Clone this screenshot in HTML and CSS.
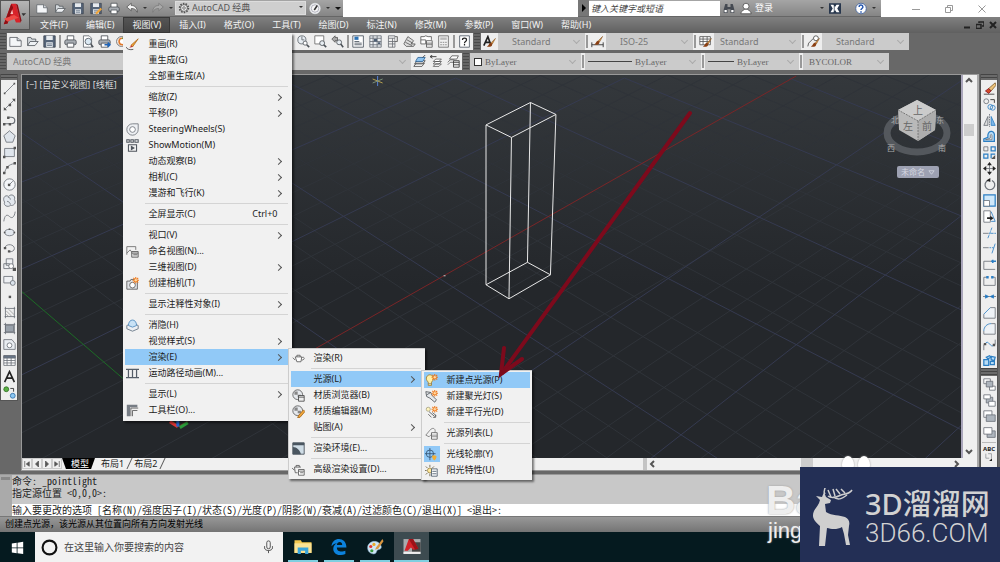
FILE: index.html
```html
<!DOCTYPE html>
<html lang="zh-CN">
<head>
  <meta charset="UTF-8">
  <meta name="viewport" content="width=device-width, initial-scale=1.0">
  <title>AutoCAD 经典</title>
  <link rel="stylesheet" href="styles.css">
</head>
<body>
  <!-- shared icons -->
  <svg class="sprite" aria-hidden="true">
    <symbol id="i-new" viewBox="0 0 16 16"><path d="M1 3h9l5 4v7H1z" fill="#f4f6f8" stroke="#5c6066"/><path d="M10 3v4h5" fill="#cfd4da" stroke="#5c6066"/></symbol>
    <symbol id="i-open" viewBox="0 0 16 16"><path d="M2 13V3h4l1 2h5v3" fill="#d5dade" stroke="#50555b"/><path d="M2 13l3-5h10l-4 5z" fill="#eef1f4" stroke="#50555b"/></symbol>
    <symbol id="i-save" viewBox="0 0 16 16"><path d="M1 1h14v14H1z" fill="#566579" stroke="#3c4450"/><path d="M4 1h8v5H4zM4 9h8v6H4z" fill="#e6eaee"/><path d="M5 11h6M5 13h6" stroke="#566579"/></symbol>
    <symbol id="i-print" viewBox="0 0 16 16"><path d="M4 6V1h8v5" fill="#fff" stroke="#474c52"/><rect x="1" y="6" width="14" height="6" rx="2" fill="#a8adb3" stroke="#474c52"/><path d="M4 10h8v5H4z" fill="#fff" stroke="#474c52"/></symbol>
    <symbol id="i-doc" viewBox="0 0 16 16"><path d="M3 1h7l3 3v11H3z" fill="#fff" stroke="#60656b"/></symbol>
    <symbol id="i-brush" viewBox="0 0 16 16"><path d="M15 1L8 8l2 2z" fill="#d99a4e" stroke="#8d5a26"/><path d="M8 8c-4 0-3 5-7 6 4 2 9 0 9-4z" fill="#8a3f12"/></symbol>
    <symbol id="i-star" viewBox="0 0 16 16"><path d="M12 0v8M8 4h8M9 1l6 6M15 1L9 7" stroke="#f07818" stroke-width="1.3"/><circle cx="12" cy="4" r="1.5" fill="#ffd9a0"/></symbol>
  </svg>

  <div class="desktop">
    <header class="app-head">
      <button class="app-logo" aria-label="应用程序菜单">
        <svg viewBox="0 0 30 30"><path d="M3 25L11 3h5l5 20h-5l-2-5H9l-2 6z" fill="#d8232a"/><path d="M11 3l-8 22 4-1 6-17zM16 3l5 20 1-2-4-17z" fill="#8d0f14"/><path d="M10 14h3l-1-5z" fill="#f6c3c0"/><path d="M3 19l11-4 5 3-12 4z" fill="#ee4b46"/><path d="M22 13h5l-3 3z" fill="#333"/></svg>
      </button>
      <div class="title-bar">
        <div class="quick">
          <button class="qbtn" aria-label="新建"><svg><use href="#i-new"/></svg></button>
          <button class="qbtn" aria-label="打开"><svg><use href="#i-open"/></svg></button>
          <button class="qbtn" aria-label="保存"><svg><use href="#i-save"/></svg></button>
          <button class="qbtn" aria-label="另存为"><svg viewBox="0 0 16 16"><use href="#i-save"/><path d="M7 14l7-7 2 2-7 7z" fill="#f1a63a"/></svg></button>
          <button class="qbtn" aria-label="打印"><svg><use href="#i-print"/></svg></button>
          <button class="qbtn" aria-label="放弃"><svg viewBox="0 0 16 16"><path d="M1 6l6-5v3c5 0 8 3 8 9-2-4-4-5-8-5v3z" fill="#f3f3f3" stroke="#4e4e4e"/></svg></button>
          <span class="caret"></span>
          <button class="qbtn" aria-label="重做"><svg viewBox="0 0 16 16"><path d="M15 6L9 1v3C4 4 1 7 1 13c2-4 4-5 8-5v3z" fill="#aaa" stroke="#787878"/></svg></button>
          <span class="caret"></span>
          <label class="space-pick">
            <svg viewBox="0 0 16 16"><circle cx="8" cy="8" r="5.5" fill="none" stroke="#555" stroke-width="3" stroke-dasharray="2 1.4"/><circle cx="8" cy="8" r="4.5" fill="#eee" stroke="#555"/><circle cx="8" cy="8" r="1.7" fill="none" stroke="#555"/></svg>
            <select aria-label="工作空间"><option>AutoCAD 经典</option></select>
          </label>
          <button class="qbtn compass" aria-label="工作空间设置"><svg viewBox="0 0 16 16"><circle cx="8" cy="8" r="7" fill="#f6f6f6" stroke="#dfe3e6"/><circle cx="8" cy="8" r="5" fill="none" stroke="#99a"/><path d="M11 4L7 10" stroke="#333" stroke-width="2"/></svg></button>
          <span class="caret"></span>
          <span class="caret wide"></span>
        </div>
        <div class="info-center">
          <span class="play"></span>
          <input class="keyword" type="text" placeholder="键入关键字或短语" aria-label="键入关键字或短语">
          <button class="qbtn" aria-label="搜索"><svg viewBox="0 0 16 16"><path d="M3 2h3v4h4V2h3l2 7v5h-5V9H6v5H1V9z" fill="#454a52"/><path d="M2 10h3v3H2zM11 10h3v3h-3z" fill="#fff"/></svg></button>
          <button class="sign-in"><svg viewBox="0 0 16 16"><circle cx="8" cy="5" r="4" fill="#fff" stroke="#444"/><path d="M1 15c0-4 4-4 5-6h4c1 2 5 2 5 6z" fill="#fff" stroke="#444"/></svg>登录</button>
          <span class="caret"></span>
          <button class="qbtn" aria-label="Exchange"><svg viewBox="0 0 16 16"><path d="M0 1h16v14H0z" fill="#27364c"/><path d="M2 3h4l2 3 2-3h4l-3 5 3 5h-4l-2-3-2 3H2l3-5z" fill="#fff"/><path d="M7 2v12" stroke="#27364c"/></svg></button>
          <button class="qbtn help" aria-label="帮助"><svg viewBox="0 0 16 16"><circle cx="8" cy="8" r="7" fill="#fff" stroke="#33589a"/><path d="M5.500 6c0-4 5-3 5 0 0 2-2.500 2-2.500 4M8 11.500v2" fill="none" stroke="#2456b0" stroke-width="2"/></svg></button>
          <span class="caret"></span>
        </div>
        <div class="win-btns">
          <button aria-label="最小化"><svg viewBox="0 0 8 8"><path d="M0 4.500h8"/></svg></button>
          <button aria-label="还原"><svg viewBox="0 0 8 8"><path d="M.5 2.500h5v5h-5zM2.500 2V.5h5v5H6"/></svg></button>
          <button aria-label="关闭"><svg viewBox="0 0 8 8"><path d="M.5.5l7 7M7.500.5l-7 7"/></svg></button>
        </div>
      </div>
      <nav class="menu-bar">
        <button>文件(F)</button>
        <button>编辑(E)</button>
        <div class="menu-open">
          <button class="current">视图(V)</button>
          <ul class="menu view-menu">
            <li><button><svg viewBox="0 0 16 16"><path d="M15 1L6 9l2 2z" fill="#f1a63a" stroke="#b06a1c"/><path d="M7 9l-3 3 4-1z" fill="#b33"/><path d="M0 11c1 3 5 4 9 3" fill="none" stroke="#444"/></svg><span>重画(R)</span></button></li>
            <li><button><span>重生成(G)</span></button></li>
            <li><button><span>全部重生成(A)</span></button></li>
            <li class="rule"></li>
            <li><button class="more"><span>缩放(Z)</span></button></li>
            <li><button class="more"><span>平移(P)</span></button></li>
            <li><button><svg viewBox="0 0 16 16"><path d="M8 1h7v7a7 7 0 1 1-7-7z" fill="#eef0f3" stroke="#6b7078"/><circle cx="8" cy="8" r="3.500" fill="#fff" stroke="#6b7078"/></svg><span>SteeringWheels(S)</span></button></li>
            <li><button><svg viewBox="0 0 16 16"><path d="M1 1h3v3H1zM6 1h3v3H6zM11 1h4v3h-4zM3 7h10v8H3z" fill="none" stroke="#50565e" stroke-width="1.300"/><path d="M6 8l5 3-5 3z" fill="#50565e"/></svg><span>ShowMotion(M)</span></button></li>
            <li><button class="more"><span>动态观察(B)</span></button></li>
            <li><button class="more"><span>相机(C)</span></button></li>
            <li><button class="more"><span>漫游和飞行(K)</span></button></li>
            <li class="rule"></li>
            <li><button><span>全屏显示(C)</span><kbd>Ctrl+0</kbd></button></li>
            <li class="rule"></li>
            <li><button class="more"><span>视口(V)</span></button></li>
            <li><button><svg viewBox="0 0 16 16"><path d="M1 12V2h11v4M1 10l4-4 4 5" fill="none" stroke="#666"/><path d="M7 8h8v7H7z" fill="#ddd" stroke="#555"/><path d="M7 10h8M9 12h5" stroke="#555"/></svg><span>命名视图(N)...</span></button></li>
            <li><button class="more"><span>三维视图(D)</span></button></li>
            <li><button><svg viewBox="0 0 16 16"><path d="M1 5h4l1-2h5v2h3v10H1z" fill="#dfe2e6" stroke="#555"/><circle cx="8" cy="10" r="3.500" fill="#fff" stroke="#555"/><use href="#i-star"/></svg><span>创建相机(T)</span></button></li>
            <li class="rule"></li>
            <li><button class="more"><span>显示注释性对象(I)</span></button></li>
            <li class="rule"></li>
            <li><button><svg viewBox="0 0 16 16"><path d="M1 8l7-3 7 3v4l-7 3-7-3z" fill="#eceff3" stroke="#5d6d7e"/><path d="M3 8c0-9 10-9 10 0l-5 2z" fill="#c8e2f6" stroke="#4a86bb"/></svg><span>消隐(H)</span></button></li>
            <li><button class="more"><span>视觉样式(S)</span></button></li>
            <li class="sub">
              <button class="more active"><span>渲染(E)</span></button>
              <ul class="menu render-menu">
                <li><button><svg viewBox="0 0 16 16"><path d="M4 6h8l-1 6H6zM4 10L1 7M12 7c4-2 4 3 0 3M6 6V4h4v2" fill="#fff" stroke="#555"/></svg><span>渲染(R)</span></button></li>
                <li class="rule"></li>
                <li class="sub">
                  <button class="more active"><span>光源(L)</span></button>
                  <ul class="menu light-menu">
                    <li><button class="active"><svg viewBox="0 0 16 16"><path d="M4 10C-1 5 3 1 6 1s7 4 2 9v4H4z" fill="#fff0a8" stroke="#a07a28"/><path d="M4 12h4" stroke="#777"/><use href="#i-star"/></svg><span>新建点光源(P)</span></button></li>
                    <li><button><svg viewBox="0 0 16 16"><path d="M1 2l6 1 2 4 5 5-2 3-6-5-4-2z" fill="#e5e8eb" stroke="#4d5258"/><path d="M2 6l5-3" stroke="#4d5258"/><use href="#i-star"/></svg><span>新建聚光灯(S)</span></button></li>
                    <li><button><svg viewBox="0 0 16 16"><circle cx="4" cy="4" r="2.500" fill="#fff4bc" stroke="#a5a184"/><path d="M5 7l7 6M9 8l5 4M4 10l4 4M10 14h3v-3" fill="none" stroke="#555"/><use href="#i-star"/></svg><span>新建平行光(D)</span></button></li>
                    <li class="rule"></li>
                    <li><button><svg viewBox="0 0 16 16"><path d="M1 10l5-6c4-5 8-1 6 3M1 10l4 2 3-3" fill="none" stroke="#777"/><path d="M8 7h7v8H8z" fill="#fff" stroke="#555"/><path d="M8 10h7M8 12h7" stroke="#777"/></svg><span>光源列表(L)</span></button></li>
                    <li class="rule"></li>
                    <li><button class="checked"><svg viewBox="0 0 16 16"><circle cx="6" cy="7" r="4.500" fill="none" stroke="#31506e"/><path d="M6 0v15M0 7h13" stroke="#31506e"/><path d="M11 9c5 0 3 4 1 6h-1c-2-2-4-6 0-6z" fill="#f3ae35"/></svg><span>光线轮廓(Y)</span></button></li>
                    <li><button><svg viewBox="0 0 16 16"><circle cx="6" cy="8" r="3" fill="#ffe99a" stroke="#9a8142"/><path d="M6 1v3M1 3l2 2M0 8h2M1 13l2-2M11 3L9 5M6 12v3" stroke="#665c3f"/><path d="M8 6h7v9H8z" fill="#fff" stroke="#456"/><path d="M9 9h5M9 12h5" stroke="#456"/></svg><span>阳光特性(U)</span></button></li>
                  </ul>
                </li>
                <li><button><svg viewBox="0 0 16 16"><circle cx="7" cy="7" r="6" fill="#e6e9ed" stroke="#555"/><path d="M3 3h4v4H3zM7 7h4v3H7z" fill="#888"/><path d="M8 8h7v7H8z" fill="#eee" stroke="#444"/><path d="M8 10h7" stroke="#444"/></svg><span>材质浏览器(B)</span></button></li>
                <li><button><svg viewBox="0 0 16 16"><circle cx="7" cy="7" r="6" fill="#e6e9ed" stroke="#555"/><path d="M3 3h4v4H3zM7 7h4v3H7z" fill="#888"/><path d="M14 6l2 2-6 7-3 1 1-3z" fill="#f1a63a" stroke="#a0641a"/></svg><span>材质编辑器(M)</span></button></li>
                <li><button class="more"><span>贴图(A)</span></button></li>
                <li class="rule"></li>
                <li><button><svg viewBox="0 0 16 16"><path d="M1 1h14v14H1z" fill="#cfdde6" stroke="#3c4650"/><path d="M1 1h14v3H1zM1 6c5 0 9 4 10 9H1z" fill="#4a5660"/></svg><span>渲染环境(E)...</span></button></li>
                <li class="rule"></li>
                <li><button><svg viewBox="0 0 16 16"><path d="M3 5h8M3 5l1 7h3M3 9L0 6M5 5V3h4v2" fill="none" stroke="#555"/><path d="M8 8h7v7H8z" fill="#fff" stroke="#555"/><path d="M8 10h7M10 12h4" stroke="#555"/></svg><span>高级渲染设置(D)...</span></button></li>
              </ul>
            </li>
            <li><button><svg viewBox="0 0 16 16"><path d="M0 3h16M0 13h16M3 3v10M8 3v10M13 3v10" stroke="#555d68" stroke-width="1.500"/></svg><span>运动路径动画(M)...</span></button></li>
            <li class="rule"></li>
            <li><button class="more"><span>显示(L)</span></button></li>
            <li><button><svg viewBox="0 0 16 16"><path d="M1 1h13v3H5v11H1z" fill="#777d85"/><path d="M6 5h9M6 5v10M8 8h6M8 8v7" fill="none" stroke="#555"/></svg><span>工具栏(O)...</span></button></li>
          </ul>
        </div>
        <button>插入(I)</button>
        <button>格式(O)</button>
        <button>工具(T)</button>
        <button>绘图(D)</button>
        <button>标注(N)</button>
        <button>修改(M)</button>
        <button>参数(P)</button>
        <button>窗口(W)</button>
        <button>帮助(H)</button>
        <div class="doc-btns">
          <button aria-label="最小化文档"><svg viewBox="0 0 8 8"><path d="M1 6.500h6"/></svg></button>
          <button aria-label="还原文档"><svg viewBox="0 0 8 8"><path d="M0 3.500h5v4H0zM3 2V1h5v4H6" stroke-width="1.500"/></svg></button>
          <button aria-label="关闭文档"><svg viewBox="0 0 8 8"><path d="M1 1l6 6M7 1L1 7"/></svg></button>
        </div>
      </nav>
    </header>

    <div class="bars">
      <div class="bar-row">
        <i class="grip"></i>
        <div class="bar standard-bar">
          <div class="tools">
            <button class="tool" aria-label="新建"><svg><use href="#i-new"/></svg></button>
            <button class="tool" aria-label="打开"><svg><use href="#i-open"/></svg></button>
            <button class="tool" aria-label="保存"><svg><use href="#i-save"/></svg></button>
            <i class="split"></i>
            <button class="tool" aria-label="打印"><svg><use href="#i-print"/></svg></button>
            <button class="tool" aria-label="打印预览"><svg viewBox="0 0 16 16"><use href="#i-doc"/><circle cx="9" cy="8" r="4" fill="#dbe9f3" stroke="#4f555c"/><path d="M12 11l3 4" stroke="#4f555c" stroke-width="2"/></svg></button>
            <button class="tool" aria-label="发布"><svg viewBox="0 0 16 16"><use href="#i-print"/><path d="M8 11h4V8l4 4-4 4v-3H8z" fill="#1d63b8"/></svg></button>
            <button class="tool" aria-label="三维打印"><svg viewBox="0 0 16 16"><circle cx="8" cy="8" r="6" fill="#fff" stroke="#555"/><circle cx="9" cy="8" r="4" fill="none" stroke="#e0792d" stroke-width="2"/><path d="M9 4a4 4 0 0 1 4 4" fill="none" stroke="#3fa14b" stroke-width="2"/></svg></button>
          </div>
          <div class="tools">
            <button class="tool" aria-label="实时缩放"><svg viewBox="0 0 16 16"><circle cx="6" cy="6" r="5" fill="#e7edf2" stroke="#5b6168"/><path d="M6 2v4h3" fill="none" stroke="#5b6168"/><circle cx="10" cy="10" r="2.500" fill="#fff" stroke="#4b5157"/><path d="M12 12l3 3" stroke="#4b5157" stroke-width="2"/></svg></button>
            <button class="tool" aria-label="窗口缩放"><svg viewBox="0 0 16 16"><path d="M1 1h11v10H1z" fill="#fff" stroke="#666"/><circle cx="10" cy="10" r="3" fill="#e7edf2" stroke="#4b5157"/><path d="M12 12l3 3" stroke="#4b5157" stroke-width="2"/></svg></button>
            <button class="tool" aria-label="缩放上一个"><svg viewBox="0 0 16 16"><path d="M1 5l4-4v2h3v4H5v2z" fill="#aaa" stroke="#555"/><circle cx="10" cy="9" r="3" fill="#e7edf2" stroke="#4b5157"/><path d="M12 11l3 4" stroke="#4b5157" stroke-width="2"/></svg></button>
            <i class="split"></i>
            <button class="tool" aria-label="特性"><svg viewBox="0 0 16 16"><path d="M1 1h13v14H1z" fill="#fff" stroke="#444e59"/><path d="M3 2h5v4H3z" fill="#2d73b5"/><path d="M3 8h6M3 10h9M3 12h9" stroke="#444e59"/></svg></button>
            <button class="tool" aria-label="设计中心"><svg viewBox="0 0 16 16"><path d="M1 1h14v14H1zM1 4h14M1 8h14M1 12h14M5 1v14M10 1v14" fill="#edf0f3" stroke="#626a74"/><path d="M6 5h4v3H6zM11 9h3v2h-3z" fill="#4d5e74"/></svg></button>
            <button class="tool" aria-label="工具选项板"><svg viewBox="0 0 16 16"><path d="M3 1h8v14H3zM3 4h8M3 8h8M3 11h8M8 4v11" fill="#eee" stroke="#6b6f75"/><path d="M11 2h3v6h-3" fill="#ddd" stroke="#555"/></svg></button>
            <button class="tool" aria-label="图纸集"><svg viewBox="0 0 16 16"><path d="M1 11l5-9 7 5-3 4h5l-2 3H4z" fill="#ddd" stroke="#555"/><path d="M3 9l8 4M5 6l7 4" stroke="#555"/></svg></button>
            <button class="tool" aria-label="标记集"><svg viewBox="0 0 16 16"><path d="M1 6V2h4l2-1 3 1h4v4M1 6h6v5H1zM8 7h7v8H8zM8 10h7M8 12h7" fill="#fff" stroke="#555"/></svg></button>
            <button class="tool" aria-label="计算器"><svg viewBox="0 0 16 16"><path d="M2 1h12v14H2z" fill="#f1f1f1" stroke="#666"/><path d="M4 3h8v3H4z" fill="#bbb"/><path d="M4 9h8M4 12h8" stroke="#777" stroke-dasharray="2 1"/></svg></button>
            <i class="split"></i>
            <button class="tool" aria-label="帮助"><svg viewBox="0 0 16 16"><path d="M2 1h12v14H2z" fill="#fff" stroke="#4b5561"/><path d="M5.500 6c0-3 5-3 5 0 0 2-2.500 2-2.500 4M8 11v2" fill="none" stroke="#222" stroke-width="1.500"/></svg></button>
          </div>
        </div>
        <i class="grip"></i>
        <div class="bar">
          <span class="tool"><svg viewBox="0 0 16 16"><path d="M1 13L6 2l4 11M3 9h6" fill="none" stroke="#222" stroke-width="2"/><g transform="translate(4 3)"><use href="#i-brush" width="12" height="13"/></g></svg></span>
          <label class="combo c-style"><select class="mid" aria-label="文字样式"><option>Standard</option></select></label>
          <i class="split"></i>
          <span class="tool"><svg viewBox="0 0 16 16"><path d="M1 9v6M15 9v6M1 12h14" stroke="#222"/><use href="#i-brush" x="3" y="1" width="12" height="12"/></svg></span>
          <label class="combo c-style"><select class="mid" aria-label="标注样式"><option>ISO-25</option></select></label>
          <i class="split"></i>
          <span class="tool"><svg viewBox="0 0 16 16"><path d="M1 2h13v10H1zM1 5h13M1 8h13M5 2v10M10 2v10" fill="#fff" stroke="#555"/><g transform="translate(4 3)"><use href="#i-brush" width="12" height="13"/></g></svg></span>
          <label class="combo c-style"><select aria-label="表格样式"><option>Standard</option></select></label>
          <i class="split"></i>
          <span class="tool"><svg viewBox="0 0 16 16"><path d="M1 14l1-4 6-6h4" fill="none" stroke="#444"/><circle cx="11" cy="4" r="3" fill="#fff" stroke="#444"/><g transform="translate(4 3)"><use href="#i-brush" width="12" height="13"/></g></svg></span>
          <label class="combo c-style"><select class="mid" aria-label="多重引线样式"><option>Standard</option></select></label>
        </div>
      </div>
      <div class="bar-row">
        <i class="grip"></i>
        <div class="bar">
          <label class="combo c-space"><select aria-label="工作空间"><option>AutoCAD 经典</option></select></label>
          <button class="tool" aria-label="图层特性"><svg viewBox="0 0 16 16"><path d="M1 14l3-4h10l-3 4zM2 11l3-4h10l-3 4z" fill="#fff" stroke="#444"/><path d="M3 8l3-5h9l-3 5z" fill="#8cc2ee" stroke="#2b5f90"/><path d="M12 3l3-3" stroke="#333"/></svg></button>
          <button class="tool" aria-label="上一个图层"><svg viewBox="0 0 16 16"><path d="M4 14l3-3h7l-3 3zM4 11l3-3h7l-3 3zM4 8l3-3h7l-3 3z" fill="#fff" stroke="#555"/><path d="M1 2h7M3 0L0 2l3 2" fill="none" stroke="#222"/></svg></button>
          <button class="tool" aria-label="图层状态"><svg viewBox="0 0 16 16"><path d="M1 12l3-3h5M1 9l3-3h5M3 5l3-4h8l-2 4z" fill="#fff" stroke="#555"/><path d="M8 7h7v8H8z" fill="#eee" stroke="#333"/><path d="M8 9h7M8 12h7" stroke="#333"/></svg></button>
        </div>
        <i class="grip"></i>
        <div class="bar">
          <label class="combo c-color serif"><i class="swatch"></i><select aria-label="颜色"><option>ByLayer</option></select></label>
          <i class="split"></i>
          <label class="combo c-line serif"><i class="stroke long"></i><select aria-label="线型"><option>ByLayer</option></select></label>
          <i class="split"></i>
          <label class="combo c-weight serif"><i class="stroke"></i><select aria-label="线宽"><option>ByLayer</option></select></label>
          <i class="split"></i>
          <label class="combo c-plot serif"><select aria-label="打印样式"><option>BYCOLOR</option></select></label>
        </div>
      </div>
    </div>

    <main class="workspace">
      <aside class="side-bar">
        <i class="side-grip"></i>
        <button aria-label="直线"><svg viewBox="0 0 16 16"><path d="M2 14L14 2"/><path class="dot" d="M1 13h2v2H1zM13 1h2v2h-2z"/></svg></button>
        <button aria-label="构造线"><svg viewBox="0 0 16 16"><path d="M1 15L15 1"/><path class="dot" d="M7 7h3v3H7zM1 15v-4l4 4zM15 1v4l-4-4z"/></svg></button>
        <button aria-label="多段线"><svg viewBox="0 0 16 16"><path d="M1 12h9c6 0 6-8 0-8H7" stroke-width="1.500"/><path class="dot" d="M0 11h3v3H0zM7 11h3v3H7zM5 3h3v3H5z"/></svg></button>
        <button aria-label="多边形"><svg viewBox="0 0 16 16"><path d="M8 1l7 6-3 8H4L1 7z" fill="#dfe5ec"/></svg></button>
        <button aria-label="矩形"><svg viewBox="0 0 16 16"><path d="M2 3h12v10H2z" fill="#dfe5ec"/><path class="dot" d="M0 12h3v3H0zM13 1h3v3h-3z"/></svg></button>
        <button aria-label="圆弧"><svg viewBox="0 0 16 16"><path d="M2 14C3 7 7 3 14 2"/><path class="dot" d="M0 12h3v3H0zM4 5h3v3H4zM13 0h3v3h-3z"/></svg></button>
        <button aria-label="圆"><svg viewBox="0 0 16 16"><circle cx="8" cy="8" r="7" fill="#f4f6f9"/><path d="M8 8l4-4"/><path class="dot" d="M6 7h3v3H6z"/></svg></button>
        <button aria-label="修订云线"><svg viewBox="0 0 16 16"><path d="M7 3c3-4 9-1 7 4 3 4-1 8-5 7-3 3-9 0-7-4C-1 6 2 0 7 3z" fill="#e3e8ee"/><path d="M6 4c2 0 3 1 3 3M5 9c2 0 4 2 4 4"/></svg></button>
        <button aria-label="样条曲线"><svg viewBox="0 0 16 16"><path d="M1 14c1-8 4-9 7-6s6 1 7-6"/></svg></button>
        <button aria-label="椭圆"><svg viewBox="0 0 16 16"><ellipse cx="8" cy="8" rx="6" ry="4" fill="#e3e8ee"/><path class="dot" d="M1 7h2v2H1zM13 7h2v2h-2zM7 3h2v2H7z"/></svg></button>
        <button aria-label="椭圆弧"><svg viewBox="0 0 16 16"><path d="M2 7c3-6 12-4 12 1 0 3-3 4-6 4"/><path class="dot" d="M1 6h3v3H1zM6 10h3v3H6z"/></svg></button>
        <button aria-label="插入块"><svg viewBox="0 0 16 16"><path d="M4 1h8v8H4zM1 7h7v6H1z" fill="#eef0f3"/><circle cx="10" cy="10" r="3" fill="#fff"/><path class="dot" d="M12 12h4v4h-4z"/></svg></button>
        <button aria-label="创建块"><svg viewBox="0 0 16 16"><path d="M1 3h11v8H1z" fill="#eef0f3"/><circle cx="12" cy="11" r="3" fill="#dbe3eb"/></svg></button>
        <button aria-label="点"><svg viewBox="0 0 16 16"><path class="dot" d="M7 7h3v3H7z"/></svg></button>
        <button aria-label="图案填充"><svg viewBox="0 0 16 16"><path d="M2 3h13M2 13h13M3 1v14M14 1v14"/><path d="M4 6l7 7M4 10l3 3M7 4l7 7" stroke="#999"/></svg></button>
        <button aria-label="渐变色"><svg viewBox="0 0 16 16"><path d="M3 4h10v8H3z" fill="#9aa2ab"/><path d="M1 3h14M1 13h14M3 1v14M14 1v14"/></svg></button>
        <button aria-label="面域"><svg viewBox="0 0 16 16"><path d="M1 2h10l4 5v7H1z" fill="#e9edf1"/><circle cx="8" cy="9" r="3" fill="#fff"/></svg></button>
        <button aria-label="表格"><svg viewBox="0 0 16 16"><path d="M1 2h14v12H1zM1 8h14M1 11h14M5 5v9M10 5v9" fill="#fff"/><path d="M1 2h14v3H1z" fill="#667486"/></svg></button>
        <button aria-label="多行文字"><svg viewBox="0 0 16 16"><path d="M2 15L8 2l6 13M4 10h8" stroke="#222" stroke-width="2"/></svg></button>
        <button aria-label="添加选定对象"><svg viewBox="0 0 16 16"><circle cx="4" cy="4" r="3" fill="#5bb044" stroke="#2c6f20"/><circle cx="12" cy="12" r="3" fill="#8cc7f2" stroke="#2b6ca8"/><path d="M9 3h4v4" stroke="#222"/></svg></button>
      </aside>

      <section class="viewport">
        <div class="canvas">
          <svg class="scene" viewBox="22 74 940 385" preserveAspectRatio="xMinYMin slice">
            <path class="minor" d="M22 128L170 74M22 146L215 74M22 163L250 74M22 202L330 74M22 224L372 74M22 246L414 74M22 293L500 74M22 320L542 74M22 347L584 74M22 403L668 74M22 432L710 74M40 459L752 74M140 459L840 74M210 459L885 74M280 459L930 74M360 459L962 101M455 459L962 128M510 459L962 154M560 459L962 182M605 459L962 196M700 459L962 262M755 459L962 305M810 459L962 342M868 459L962 385"/>
            <path class="minor" d="M22 165L440 459M22 198L380 459M22 232L320 459M22 100L540 459M45 74L610 459M80 74L660 459M165 74L780 459M205 74L850 459M248 74L920 459M325 74L962 412M370 74L962 379M412 74L962 345M500 74L962 285M540 74L962 262M583 74L962 238M668 74L962 196M710 74L962 179M752 74L962 161M840 74L962 124M885 74L962 105"/>
            <path class="major" d="M22 111L123 75M22 181L292 77M22 268L456 77M22 374L625 77M400 459L962 80M650 459L962 215M925 459L962 425M22 132L500 459M130 77L720 459M280 77L962 429M456 77L962 309M625 77L962 215M790 77L962 147"/>
            <path class="axis-x" d="M797 75L178 426"/>
            <path class="axis-y" d="M22 291L178 425"/>
            <path d="M170 421l8 5" stroke="#d33" stroke-width="3"/><path d="M180 427l8-5" stroke="#2c9b3a" stroke-width="3"/><path d="M178 420v6" stroke="#26c" stroke-width="3"/>
            <path class="solid" d="M486.500 124L531 101.500 556.500 113.500 512 136.500zM486.500 284L528 261.500 551 274 509.500 298zM486.500 124v160M531 101.500L528 261.500M556.500 113.500L551 274M512 136.500L509.500 298"/>
            <path d="M444 275h2" stroke="#ccc"/>
            <path d="M378 75v10" stroke="#5583d6"/><path d="M373 78l10 4" stroke="#b5a050"/><path d="M383 78l-10 4" stroke="#79907a"/>
            <ellipse cx="918" cy="132" rx="30" ry="19" class="ring"/>
            <g class="dir"><text x="892" y="122">北</text><text x="937" y="122">东</text><text x="888" y="150">西</text><text x="939" y="150">南</text></g>
            <path d="M918 99l19 10-1 20-17 11-19-11-1-20z" fill="#b9b9b9"/>
            <path d="M918 99l19 10-18 11-20-11z" fill="#cbcbcb"/>
            <path d="M919 120l18-11-1 20-17 11z" fill="#adadad"/>
            <path d="M899 109l20 11 18-11M919 120v20" fill="none" stroke="#777" stroke-dasharray="2 1"/>
            <text x="914" y="113">上</text><text x="904" y="129">左</text><text x="923" y="129">前</text>
          </svg>
          <span class="view-tag">[−] [自定义视图] [线框]</span>
          <button class="ucs-name">未命名 <svg viewBox="0 0 8 8"><path d="M1 2h6L4 6z" fill="none" stroke="#cfd2dd"/></svg></button>
        </div>
        <div class="vscroll">
          <button aria-label="向上"><svg viewBox="0 0 8 8"><path d="M1 5l3-3 3 3"/></svg></button>
          <i class="thumb"></i>
          <button class="end" aria-label="向下"><svg viewBox="0 0 8 8"><path d="M1 2l3 3 3-3"/></svg></button>
        </div>
        <div class="tab-row">
          <button class="step" aria-label="第一个"><svg viewBox="0 0 8 8"><path d="M1 0v8M7 1v6L3 4z"/></svg></button>
          <button class="step" aria-label="上一个"><svg viewBox="0 0 8 8"><path d="M6 0v8L2 4z"/></svg></button>
          <button class="step" aria-label="下一个"><svg viewBox="0 0 8 8"><path d="M2 0v8l4-4z"/></svg></button>
          <button class="step" aria-label="最后一个"><svg viewBox="0 0 8 8"><path d="M7 0v8M1 1v6l4-3z"/></svg></button>
          <button class="tab on">模型</button>
          <button class="tab">布局1</button>
          <button class="tab">布局2</button>
          <div class="hscroll">
            <button aria-label="向左"><svg viewBox="0 0 8 8"><path d="M5 1L2 4l3 3"/></svg></button>
            <i class="thumb"></i>
            <button class="end" aria-label="向右"><svg viewBox="0 0 8 8"><path d="M3 1l3 3-3 3"/></svg></button>
          </div>
        </div>
      </section>

      <aside class="side-bar modify">
        <i class="side-grip"></i>
        <button aria-label="删除"><svg viewBox="0 0 16 16"><path d="M15 1L7 8l3 3 6-7z" fill="#ecc27a" stroke="#81602c"/><path d="M7 8l3 3-3 3-4-3z" fill="#d34a28" stroke="#812" /><path d="M1 15h13" stroke="#333"/></svg></button>
        <button aria-label="复制"><svg viewBox="0 0 16 16"><circle cx="4" cy="4" r="3"/><circle class="blue" cx="9" cy="11" r="3"/><circle class="blue" cx="12" cy="12" r="3"/><path d="M9 2h5v4" stroke="#222"/></svg></button>
        <button aria-label="镜像"><svg viewBox="0 0 16 16"><path d="M6 3v11H1z" fill="#ddd"/><path d="M8 0v16" stroke-dasharray="2 1"/><path class="blue" d="M10 3v11h5z" fill="#7fb9ea"/></svg></button>
        <button aria-label="偏移"><svg viewBox="0 0 16 16"><path class="blue" d="M1 14v-3l5-2V6c1-7 9-5 8 2v6z" fill="#b9dcf5" stroke-width="1.500"/><path d="M3 12h8V7c0-2-2-2-2 0v3z" fill="#fff"/></svg></button>
        <button aria-label="阵列"><svg viewBox="0 0 16 16"><path d="M1 1h5v5H1z"/><path class="blue" d="M10 1h5v5h-5zM1 10h5v5H1zM10 15v-5h5" stroke-width="1.500"/><path class="dot" d="M15 11v5h-5z"/></svg></button>
        <button aria-label="移动"><svg viewBox="0 0 16 16"><path d="M8 2v12M2 8h12"/><path class="dark" d="M8 0l3 4H5zM8 16l3-4H5zM0 8l4-3v6zM16 8l-4-3v6z"/></svg></button>
        <button aria-label="旋转"><svg viewBox="0 0 16 16"><path d="M6 3a6 6 0 1 0 5 0" stroke-width="1.500"/><path class="dark" d="M9 0v5L4 3z"/></svg></button>
        <button aria-label="缩放"><svg viewBox="0 0 16 16"><path class="blue" d="M1 1h14v14H1z" fill="#cfe8fa" stroke-width="1.500"/><path d="M1 8h7v7H1z" fill="#fff"/></svg></button>
        <button aria-label="拉伸"><svg viewBox="0 0 16 16"><path d="M1 1h8v14H1z" fill="#fff"/><path class="blue" d="M10 2l5 12h-5"/><path class="dark" d="M5 9h4V7l4 3-4 3v-2H5z"/></svg></button>
        <button aria-label="修剪"><svg viewBox="0 0 16 16"><path d="M0 9h7"/><path class="blue" d="M6 15L11 2M9 9h7" stroke-dasharray="4 1"/></svg></button>
        <button aria-label="延伸"><svg viewBox="0 0 16 16"><path d="M0 7h7"/><path class="blue" d="M8 7h5" stroke-dasharray="2 1"/><path class="blue" d="M11 14L15 2"/></svg></button>
        <button aria-label="打断于点"><svg viewBox="0 0 16 16"><path d="M15 14H1V4h10"/><path class="blue" d="M10 4h6M12 2v4" stroke-width="2"/></svg></button>
        <button aria-label="打断"><svg viewBox="0 0 16 16"><path d="M5 4H1v10h14V4h-4"/><path class="blue" d="M4 4h3M10 4h3" stroke-width="3"/></svg></button>
        <button aria-label="合并"><svg viewBox="0 0 16 16"><path d="M0 8h16"/><path class="blue" d="M3 6l4 2-4 2zM13 6L9 8l4 2z" fill="#1c73c0"/></svg></button>
        <button aria-label="倒角"><svg viewBox="0 0 16 16"><path d="M9 2h6v13H1V10" fill="#eef2f6"/><path class="blue" d="M1 10l8-8"/></svg></button>
        <button aria-label="圆角"><svg viewBox="0 0 16 16"><path d="M10 2h5v13H1v-4" fill="#eef2f6"/><path class="blue" d="M1 11c0-5 4-9 9-9"/></svg></button>
        <button aria-label="光顺曲线"><svg viewBox="0 0 16 16"><path d="M1 15V8M15 2v6"/><path class="blue" d="M2 8c5-9 7 7 12 0"/><path class="dot" d="M1 6h3v3H1zM12 7h3v3h-3z"/></svg></button>
        <button aria-label="分解"><svg viewBox="0 0 16 16"><path class="blue" d="M1 7h6v7H1zM4 4l4-2 2 2-4 2zM10 3l5 1-1 4-4-1zM9 9h5v4H9z" fill="#b9dcf5" stroke-width="1.500"/></svg></button>
        <i class="side-grip tall"></i>
        <button aria-label="前置"><svg viewBox="0 0 16 16"><path d="M1 1h8v6H1zM8 10h7v5H8z" fill="#fff"/><path d="M4 4h8v7H4z" fill="#aeb5bd"/></svg></button>
        <button aria-label="后置"><svg viewBox="0 0 16 16"><path d="M4 4h8v7H4z" fill="#aeb5bd"/><path d="M1 1h8v5H1zM7 9h8v6H7z" fill="#fff"/></svg></button>
        <button aria-label="置于对象之上"><svg viewBox="0 0 16 16"><path d="M1 1h10v8H1z" fill="#fff"/><path d="M4 6h11v8H4z" fill="#aeb5bd"/></svg></button>
        <button aria-label="置于对象之下"><svg viewBox="0 0 16 16"><path d="M5 6h10v8H5z" fill="#aeb5bd"/><path d="M1 2h10v8H1z" fill="#fff"/></svg></button>
        <i class="side-rule"></i>
        <button class="abc">ABC<svg viewBox="0 0 16 16"><path d="M5 3v8h6M9 3h6v8"/><path class="dark" d="M16 11v5h-5z"/></svg></button>
      </aside>
    </main>

    <section class="command">
      <i class="cmd-grip"></i>
      <div class="cmd-body">
        <p>命令: _pointlight</p>
        <p>指定源位置 &lt;0,0,0&gt;:</p>
        <input type="text" aria-label="命令行" value="输入要更改的选项 [名称(N)/强度因子(I)/状态(S)/光度(P)/阴影(W)/衰减(A)/过滤颜色(C)/退出(X)] &lt;退出&gt;:">
      </div>
    </section>

    <div class="status">创建点光源，该光源从其位置向所有方向发射光线</div>

    <footer class="taskbar">
      <button class="start" aria-label="开始"><svg viewBox="0 0 16 16"><path d="M1 3l6-1v6H1zM8 2l7-1v7H8zM1 9h6v6l-6-1zM8 9h7v7l-7-1z" fill="#fff"/></svg></button>
      <label class="search">
        <svg class="cortana" viewBox="0 0 16 16"><circle cx="8" cy="8" r="6.500" fill="none" stroke="#111" stroke-width="2"/></svg>
        <input type="text" placeholder="在这里输入你要搜索的内容" aria-label="在这里输入你要搜索的内容">
        <svg class="mic" viewBox="0 0 12 16"><rect x="4" y="1" width="4" height="9" rx="2" fill="none" stroke="#444"/><path d="M1.500 7v2c0 4 9 4 9 0V7M6 12v3" fill="none" stroke="#444"/></svg>
      </label>
      <button class="task" aria-label="文件资源管理器"><svg viewBox="0 0 16 16"><path d="M0 2h6l1 2h9v10H0z" fill="#f3c84f"/><path d="M0 5h16v9H0z" fill="#fbe395"/><path d="M3 15V9h10v6h-3v-3H6v3z" fill="#3aa5dc"/></svg></button>
      <button class="task" aria-label="Edge"><svg viewBox="0 0 16 16"><path d="M1 8c0-9 14-10 14 1H6c0 5 6 4 8 3v3C7 18 1 14 3 8c1-2 3-3 3-3-3 0-5 3-5 3zM6 6.500h5c0-4-5-3-5 0z" fill="#0c82dd"/></svg></button>
      <button class="task" aria-label="画图"><svg viewBox="0 0 16 16"><path d="M1 9c0-5 7-8 11-4s1 6-1 6-1 4-4 4-6-2-6-6z" fill="#cfe5f4" stroke="#7ba6c2" stroke-width=".5"/><circle cx="4" cy="8" r="1.500" fill="#d33"/><circle cx="7" cy="6" r="1.500" fill="#e9a92a"/><circle cx="5" cy="12" r="1.500" fill="#3a9a3f"/><path d="M15 1L9 9l-1 2 3-1 5-7z" fill="#d99640"/></svg></button>
      <button class="task here" aria-label="AutoCAD"><svg viewBox="0 0 16 16"><path d="M0 1h16v14H0z" fill="#a9abad"/><path d="M8 4h8v9H8z" fill="#444"/><path d="M1 12L5 1h4l5 9-5 1-2-2-3 3z" fill="#d2232a"/><path d="M5 1h4l5 9-3 1z" fill="#9c1218"/><path d="M0 13h16v2H0z" fill="#eee"/></svg></button>
    </footer>
  </div>

  <!-- hand-drawn pointer -->
  <svg class="pointer" viewBox="0 0 210 275" aria-hidden="true"><path d="M198 8L10 268" stroke-width="4"/><path d="M12 243L9 269l21-15" stroke-width="4"/></svg>

  <div class="mark"><b>Ba</b><span>jing</span><i></i><i></i></div>

  <div class="brand">
    <svg viewBox="0 0 46 60"><path d="M5 9l6 1 2-5 2 5 5 3-1 3-5 1 1 8c6 4 14 3 19 5 4 2 5 5 4 9l-1 9 2 10h-4l-2-11-2-7c-5 3-11 2-15 1l-1 9-1 9H8l1-20C4 34 0 31 3 24c2-4 5-6 6-11z" fill="#cfcfcf"/><path d="M14 7c-2-3 0-5 0-6M17 9c4 3 9 1 13-1 4-2 8 0 11-5M20 10l-3-7M24 9l-2-7M29 7l-4-5M34 6l-4-4M22 10c6 4 10 1 14-2" fill="none" stroke="#cfcfcf" stroke-width="1.500"/></svg>
    <div><b>3D溜溜网</b><span>3D66.COM</span></div>
  </div>
</body>
</html>
```
FILE: styles.css
```css
* {
  box-sizing: border-box;
}
body {
  margin: 0;
  font-family: "Noto Sans", "Noto Sans CJK SC", sans-serif;
  font-size: 9px;
  line-height: 12px;
  color: #222;
  background-color: #686868;
  overflow: hidden;
}
button, input, select {
  margin: 0;
  padding: 0;
  border: 0;
  background: none;
  font: inherit;
  color: inherit;
  border-radius: 0;
  outline: none;
}
select {
  appearance: none;
}
ul {
  list-style: none;
  margin: 0;
  padding: 0;
}
svg {
  display: block;
  flex: none;
}
.sprite {
  position: absolute;
  width: 0;
  height: 0;
}
.desktop {
  height: 100vh;
  display: flex;
  flex-direction: column;
}

/* title and menu */
.app-head {
  display: grid;
  grid-template-columns: 30px 1fr;
  grid-template-rows: 17px 16px;
  background: linear-gradient(#a2a2a2, #606060);
}
.app-logo {
  grid-row: 1 / 3;
  height: 30px;
  background: linear-gradient(#b5b5b5, #858585);
  border: 1px solid #555;
}
.app-logo svg {
  width: 28px;
  height: 28px;
}
.title-bar {
  display: flex;
  background-color: #fff;
}
.quick, .info-center {
  display: flex;
  align-items: center;
  background: linear-gradient(#a5a5a5, #858585);
  border-bottom: 1px solid #666;
}
.quick {
  width: 313px;
  padding-left: 3px;
}
.qbtn {
  width: 18px;
  height: 16px;
  padding: 1px 3px;
  flex: none;
}
.qbtn svg, .sign-in svg {
  width: 12px;
  height: 13px;
}
.caret {
  flex: none;
  width: 8px;
  height: 8px;
}
.caret::before, .space-pick::after {
  content: "";
  display: block;
  margin: 3px 2px;
  border: 2px solid transparent;
  border-top-color: #333;
}
.caret.wide {
  margin-left: 2px;
}
.caret.wide::before {
  border-width: 3px;
  border-top-color: #111;
  margin: 3px 1px;
}
.space-pick {
  flex: none;
  display: flex;
  align-items: center;
  width: 131px;
  height: 14px;
  padding-left: 2px;
  background-color: #cfcfcf;
  border: 1px solid #ddd;
}
.space-pick svg {
  width: 12px;
  height: 12px;
}
.space-pick select {
  flex: 1;
  padding-left: 2px;
  color: #555;
}
.info-center {
  width: 303px;
  margin-left: 235px;
}
.play {
  width: 11px;
  height: 16px;
  padding: 4px;
  background-color: #777;
}
.play::before {
  content: "";
  display: block;
  border: 4px solid transparent;
  border-left-color: #000;
  border-right: 0;
}
.keyword {
  width: 131px;
  height: 15px;
  padding-left: 2px;
  background-color: #fff;
  font-style: italic;
}
.keyword::placeholder {
  color: #444;
}
.sign-in {
  display: flex;
  gap: 3px;
  width: 80px;
  align-items: center;
  color: #fff;
  padding-left: 2px;
}
.help {
  margin-left: 8px;
}
.win-btns {
  flex: 1;
  display: flex;
  justify-content: flex-end;
  align-items: center;
  gap: 25px;
  padding-right: 14px;
}
.win-btns svg {
  width: 8px;
  height: 8px;
  stroke: #999;
  fill: none;
}
.menu-bar {
  display: flex;
  align-items: stretch;
  padding-left: 1px;
  color: #f2f2f2;
}
.menu-bar > button, .menu-open > button {
  padding: 0 9px;
  height: 16px;
  white-space: nowrap;
}
.menu-open {
  position: relative;
}
.menu-open > .current {
  background: linear-gradient(#555, #444);
  border: 1px solid #383838;
  padding: 0 8px;
}
.doc-btns {
  margin-left: auto;
  display: flex;
  gap: 5px;
  padding-right: 3px;
}
.doc-btns svg {
  width: 8px;
  height: 8px;
  fill: none;
  stroke: #222;
  stroke-width: 2;
}

/* drop-down menus */
.menu {
  position: absolute;
  z-index: 10;
  padding: 2px;
  background-color: #f1f1f1;
  color: #1c1c1c;
  box-shadow: 2px 2px 2px rgba(0,0,0,0.5);
}
.view-menu {
  left: 0;
  top: 16px;
  width: 169px;
  padding: 3px 4px 3px 2px;
}
.menu .menu {
  top: -1px;
  left: 100%;
  border-left: 1px solid #ccc;
  border-top: 1px solid #ccc;
  padding-top: 1px;
}
.menu .render-menu {
  width: 137px;
  padding-right: 4px;
}
.light-menu {
  width: 111px;
}
.menu .sub {
  position: relative;
}
.menu li > button {
  position: relative;
  display: flex;
  align-items: center;
  width: 100%;
  height: 16px;
  padding: 0 11px 0 23px;
  text-align: left;
  white-space: nowrap;
}
.menu .menu li > button {
  padding-left: 22px;
}
.menu li > button > svg {
  position: absolute;
  left: 1px;
  width: 13px;
  height: 13px;
}
.menu kbd {
  margin-left: auto;
  font: inherit;
}
.menu .active {
  background-color: #91c9f7;
}
.menu .checked {
  background: linear-gradient(#91c9f7, #91c9f7) 0 0 / 16px 16px no-repeat;
}
.menu .more::after {
  content: "";
  position: absolute;
  right: 7px;
  width: 4px;
  height: 4px;
  border: 1px solid #555;
  border-width: 1px 1px 0 0;
  transform: rotate(45deg);
}
.menu .rule {
  height: 5px;
  margin-left: 20px;
  padding-top: 2px;
}
.menu .rule::before {
  content: "";
  display: block;
  height: 1px;
  background-color: #d4d4d4;
}

/* toolbars */
.bars {
  background-color: #686868;
  padding-bottom: 1px;
}
.bar-row {
  display: flex;
  height: 17px;
  margin-bottom: 3px;
}
.grip {
  width: 6px;
  margin-right: 1px;
  background: repeating-linear-gradient(#4a4a4a 0 1px, #666 1px 3px);
}
.bar {
  display: flex;
  background-color: #eee;
  margin-right: 1px;
}
.standard-bar {
  width: 466px;
  justify-content: space-between;
}
.tools {
  display: flex;
}
.tool {
  width: 17px;
  height: 17px;
  padding: 2px;
}
.tool svg {
  width: 13px;
  height: 13px;
}
.split {
  width: 4px;
  border: 1px solid #eee;
  border-width: 2px 1px;
  background-color: #999;
}
.combo {
  position: relative;
  display: flex;
  align-items: center;
  background-color: #cbcbcb;
  color: #777;
}
.combo::after {
  content: "";
  position: absolute;
  right: 6px;
  top: 5px;
  width: 4px;
  height: 4px;
  border: 1px solid #aaa;
  border-width: 0 1px 1px 0;
  transform: rotate(45deg);
}
.combo select {
  flex: 1;
  min-width: 0;
  padding-left: 6px;
}
.combo select.mid {
  padding-left: 14px;
}
.c-style {
  width: 87px;
}
.c-space {
  width: 404px;
}
.c-color {
  width: 111px;
}
.c-line {
  width: 116px;
}
.c-weight {
  width: 94px;
}
.c-plot {
  width: 86px;
}
.serif {
  font-family: "Liberation Serif", serif;
}
.serif select {
  padding-left: 3px;
  color: #666;
}
.c-plot select {
  padding-left: 6px;
}
.swatch {
  width: 8px;
  height: 8px;
  margin-left: 4px;
  background-color: #fff;
  border: 1px solid #333;
}
.stroke {
  width: 26px;
  height: 1px;
  margin-left: 3px;
  background-color: #444;
}
.stroke.long {
  width: 44px;
}

/* workspace */
.workspace {
  flex: 1;
  min-height: 0;
  display: flex;
  align-items: flex-start;
}
.side-bar {
  flex: none;
  width: 18px;
  background-color: #eee;
  border: 1px solid #555;
  border-width: 0 1px 1px;
}
.side-bar button {
  display: block;
  width: 16px;
  height: 16px;
  padding: 2px;
}
.side-bar svg {
  width: 13px;
  height: 13px;
  fill: none;
  stroke: #6a6f76;
}
.side-bar .dot, .side-bar .dark {
  fill: #555;
  stroke: none;
}
.side-bar .dark {
  fill: #222;
}
.side-bar .blue {
  stroke: #2c7fc4;
}
.side-grip {
  display: block;
  height: 6px;
  background: repeating-linear-gradient(#444 0 1px, #6a6a6a 1px 3px);
}
.side-grip.tall {
  height: 8px;
}
.side-rule {
  display: block;
  height: 1px;
  margin: 2px 1px;
  background-color: #bbb;
}
.modify {
  height: 100%;
  margin: 0 2px 0 1px;
  overflow: hidden;
}
.side-bar .abc {
  font-size: 6px;
  line-height: 6px;
  font-weight: bold;
  padding: 0;
}
.abc svg {
  height: 9px;
}
.viewport {
  flex: 1;
  align-self: stretch;
  margin: 0 0 1px 3px;
  display: grid;
  grid-template-columns: 1fr 14px;
  grid-template-rows: 1fr 12px;
  border: 1px solid #999;
  border-right: 2px solid #aaa;
  background-color: #f0f0f0;
}
.canvas {
  position: relative;
  overflow: hidden;
  min-height: 0;
  background: linear-gradient(#34383c, #24272b 55%);
  border-right: 2px solid #aaa6bb;
}
.scene {
  position: absolute;
  width: 100%;
  height: 100%;
  fill: none;
}
.scene .minor {
  stroke: #2f3339;
}
.scene .major {
  stroke: #353a50;
}
.scene .axis-x {
  stroke: #7a2527;
}
.scene .axis-y {
  stroke: #1c6b25;
}
.scene .solid {
  stroke: #e8e8e8;
}
.scene .ring {
  stroke: #54585d;
  stroke-width: 7;
}
.scene text {
  fill: #666;
  font-size: 10px;
}
.scene .dir text {
  fill: #aaa;
  font-size: 8px;
}
.view-tag {
  position: absolute;
  left: 4px;
  top: 4px;
  color: #dcdcdc;
}
.ucs-name {
  position: absolute;
  right: 22px;
  top: 91px;
  display: flex;
  align-items: center;
  justify-content: center;
  gap: 3px;
  width: 42px;
  height: 12px;
  border-radius: 2px;
  background-color: #9da1b2;
  color: #d5d7e0;
  font-size: 8px;
}
.ucs-name svg {
  width: 7px;
  height: 7px;
}
.vscroll {
  display: flex;
  flex-direction: column;
}
.vscroll button, .hscroll button {
  width: 12px;
  height: 12px;
  padding: 2px;
}
.vscroll svg, .hscroll svg {
  width: 8px;
  height: 8px;
  fill: none;
  stroke: #555;
  stroke-width: 2;
}
.vscroll .thumb {
  width: 10px;
  height: 12px;
  margin: 37px 1px 0;
  background-color: #cdcdcd;
}
.vscroll .end {
  margin-top: auto;
}
.tab-row {
  grid-column: 1 / 3;
  display: flex;
}
.step {
  width: 10px;
  height: 11px;
  padding: 2px 1px;
  border: 1px solid #ccc;
}
.step svg {
  width: 6px;
  height: 6px;
  fill: #555;
  stroke: #555;
}
.tab {
  position: relative;
  height: 11px;
  padding: 0 4px 0 6px;
}
.tab::after {
  content: "";
  position: absolute;
  right: -2px;
  top: 0;
  height: 11px;
  border-right: 1px solid #555;
  transform: skewX(-25deg);
}
.tab.on {
  background-color: #000;
  color: #fff;
  clip-path: polygon(0 0, 100% 0, 88% 100%, 12% 100%);
  padding: 0 6px 0 9px;
}
.hscroll {
  display: flex;
  width: 334px;
  margin-left: auto;
  border-left: 4px solid #c4c4c4;
}
.hscroll .thumb {
  width: 12px;
  height: 12px;
  margin-left: 142px;
  background-color: #cdcdcd;
}
.hscroll .end {
  margin: 0 15px 0 auto;
}

/* command line */
.command {
  display: flex;
  margin-top: 2px;
  height: 43px;
  background-color: #c8c8c8;
  border-top: 1px solid #999;
  border-bottom: 1px solid #777;
}
.cmd-grip {
  width: 12px;
  background: linear-gradient(#888, #888) 1px 2px / 9px 3px no-repeat #aaa;
}
.cmd-body {
  flex: 1;
  display: flex;
  flex-direction: column;
  font-family: "Noto Sans CJK SC", monospace;
  font-feature-settings: "hwid" 1;
  font-size: 10px;
  line-height: 12px;
}
.cmd-body p {
  margin: 0;
}
.cmd-body input {
  margin-top: auto;
  height: 12px;
  background-color: #fff;
}
.status {
  height: 15px;
  padding: 1px 5px;
  background: linear-gradient(#989898, #747474);
  color: #000;
}

/* taskbar */
.taskbar {
  display: flex;
  height: 30px;
  background-color: #051a1f;
}
.start {
  width: 35px;
  padding: 0 11px;
}
.start svg {
  width: 13px;
  height: 13px;
}
.search {
  display: flex;
  align-items: center;
  width: 248px;
  margin-right: 5px;
  padding: 0 9px 0 6px;
  gap: 6px;
  background-color: #f2f2f2;
  font-size: 10px;
}
.search input {
  flex: 1;
  min-width: 0;
}
.search input::placeholder {
  color: #444;
}
.cortana {
  width: 17px;
  height: 17px;
}
.mic {
  width: 11px;
  height: 14px;
}
.task {
  width: 30px;
  margin-right: 6px;
  padding: 0 6px;
  border-bottom: 2px solid #7fcfe0;
}
.task svg {
  width: 18px;
  height: 17px;
}
.task.here {
  width: 35px;
  margin-left: -2px;
  padding: 0 9px;
  background-color: #3d4b50;
}

/* overlays */
.pointer {
  position: absolute;
  z-index: 20;
  left: 492px;
  top: 105px;
  width: 210px;
  height: 275px;
  fill: none;
  stroke: #7d0a1c;
  stroke-linecap: round;
}
.mark {
  position: absolute;
  right: 132px;
  bottom: 20px;
  width: 102px;
  color: #eee;
  font-family: "Liberation Sans", sans-serif;
  text-shadow: 0 0 2px #999;
}
.mark b, .mark span {
  display: block;
  font-size: 41px;
  line-height: 40px;
}
.mark span {
  font-size: 22px;
  line-height: 22px;
  padding-left: 2px;
}
.mark i {
  position: absolute;
  top: -24px;
  right: 14px;
  width: 12px;
  height: 18px;
  border-radius: 50%;
  background-color: #fff;
  box-shadow: 0 0 2px #999;
}
.mark i:last-child {
  right: -2px;
}
.brand {
  position: absolute;
  z-index: 5;
  right: 0;
  bottom: 0;
  display: flex;
  align-items: center;
  gap: 8px;
  width: 200px;
  height: 95px;
  padding: 4px 0 0 11px;
  background-color: #232f55;
  color: #d2d2d2;
}
.brand svg {
  width: 46px;
  height: 60px;
}
.brand b, .brand span {
  display: block;
  font-size: 29px;
  font-weight: 500;
  line-height: 32px;
  white-space: nowrap;
}
.brand span {
  font-family: Roboto, sans-serif;
  font-size: 26px;
  font-weight: 300;
  line-height: 26px;
}
```
